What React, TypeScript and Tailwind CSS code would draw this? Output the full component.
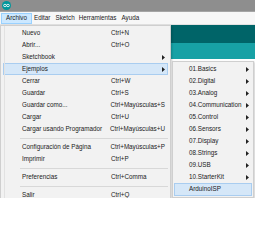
const FONT = { fontFamily: '"Liberation Sans", Arial, sans-serif' }

type Item = { label: string; shortcut?: string; arrow?: boolean; active?: boolean } | 'sep'

const MAIN: Item[] = [
  { label: 'Nuevo', shortcut: 'Ctrl+N' },
  { label: 'Abrir...', shortcut: 'Ctrl+O' },
  { label: 'Sketchbook', arrow: true },
  { label: 'Ejemplos', arrow: true, active: true },
  { label: 'Cerrar', shortcut: 'Ctrl+W' },
  { label: 'Guardar', shortcut: 'Ctrl+S' },
  { label: 'Guardar como...', shortcut: 'Ctrl+Mayúsculas+S' },
  { label: 'Cargar', shortcut: 'Ctrl+U' },
  { label: 'Cargar usando Programador', shortcut: 'Ctrl+Mayúsculas+U' },
  'sep',
  { label: 'Configuración de Página', shortcut: 'Ctrl+Mayúsculas+P' },
  { label: 'Imprimir', shortcut: 'Ctrl+P' },
  'sep',
  { label: 'Preferencias', shortcut: 'Ctrl+Comma' },
  'sep',
  { label: 'Salir', shortcut: 'Ctrl+Q' },
]

const EXAMPLES = [
  '01.Basics',
  '02.Digital',
  '03.Analog',
  '04.Communication',
  '05.Control',
  '06.Sensors',
  '07.Display',
  '08.Strings',
  '09.USB',
  '10.StarterKit',
]

function Arrow() {
  return (
    <svg width="3" height="5" viewBox="0 0 3 5" className="shrink-0">
      <polygon points="0,0 3,2.5 0,5" fill="#222" />
    </svg>
  )
}

function ArduinoLogo() {
  return (
    <svg width="9" height="9" viewBox="0 0 9 9">
      <circle cx="4.5" cy="4.5" r="4.5" fill="#00979c" />
      <ellipse cx="3" cy="4.5" rx="1.4" ry="1.2" fill="none" stroke="#fff" strokeWidth="0.8" />
      <ellipse cx="6" cy="4.5" rx="1.4" ry="1.2" fill="none" stroke="#fff" strokeWidth="0.8" />
    </svg>
  )
}

export default function App() {
  return (
    <div className="w-[255px] h-[244px] bg-white overflow-hidden text-[#1a1a1a]" style={FONT}>
      <div className="relative h-[198px] overflow-hidden">
        {/* title bar */}
        <div className="h-[12px] bg-[#8e8e8e] border-b border-[#a5a5a5] flex items-center pl-[2px]">
          <ArduinoLogo />
        </div>

        {/* menu bar */}
        <div className="h-[13px] bg-[#f7f7f7] border-b border-[#e2e2e2] flex items-center pl-[1px] text-[6.3px] leading-none">
          <span className="h-[11px] w-[31px] flex items-center justify-center bg-[#cce8ff] border border-[#99d1ff]">Archivo</span>
          <span className="px-[2px]">Editar</span>
          <span className="px-[2px] ml-px">Sketch</span>
          <span className="px-[2px]">Herramientas</span>
          <span className="px-[2px] ml-[1px]">Ayuda</span>
        </div>

        {/* editor toolbar behind the menus */}
        <div className="h-[18px] bg-[#006468]" />
        <div className="h-[16px] bg-[#17a1a5]" />

        {/* Archivo menu */}
        <div className="absolute left-0 top-[25px] w-[171px] h-[180px] bg-[#f2f2f2] border border-[#cfcfcf] pt-[1px] text-[6.3px] leading-none shadow-[1px_1px_2px_rgba(0,0,0,0.2)]">
          <div className="absolute left-[3px] top-0 bottom-0 w-px bg-[#e2e2e2]" />
          {MAIN.map((it, i) =>
            it === 'sep' ? (
              <div key={i} className="h-[6px] flex items-center pl-[19px] pr-[2px]">
                <div className="h-px w-full bg-[#d8d8d8]" />
              </div>
            ) : (
              <div
                key={i}
                className={
                  'h-[12px] mx-[2px] flex items-center pl-[18px] pr-[2px] border ' +
                  (it.active ? 'bg-[#d5e7f8] border-[#a9cdf0]' : 'border-transparent')
                }
              >
                <span className="w-[89px] whitespace-nowrap">{it.label}</span>
                <span className="flex-1 whitespace-nowrap">{it.shortcut}</span>
                {it.arrow && <Arrow />}
              </div>
            )
          )}
        </div>

        {/* Ejemplos submenu */}
        <div className="absolute left-[172px] top-[61px] w-[82px] h-[137px] bg-[#f2f2f2] border border-[#cfcfcf] pt-[1px] text-[6.3px] leading-none shadow-[1px_1px_2px_rgba(0,0,0,0.2)]">
          {EXAMPLES.map((name) => (
            <div key={name} className="h-[12px] mx-[1px] flex items-center pl-[14px] pr-[2px] border border-transparent">
              <span className="flex-1 whitespace-nowrap">{name}</span>
              <Arrow />
            </div>
          ))}
          <div className="h-[13px] mx-px flex items-center pl-[14px] border bg-[#d5e7f8] border-[#a9cdf0]">
            <span className="whitespace-nowrap">ArduinoISP</span>
          </div>
        </div>
      </div>
    </div>
  )
}
